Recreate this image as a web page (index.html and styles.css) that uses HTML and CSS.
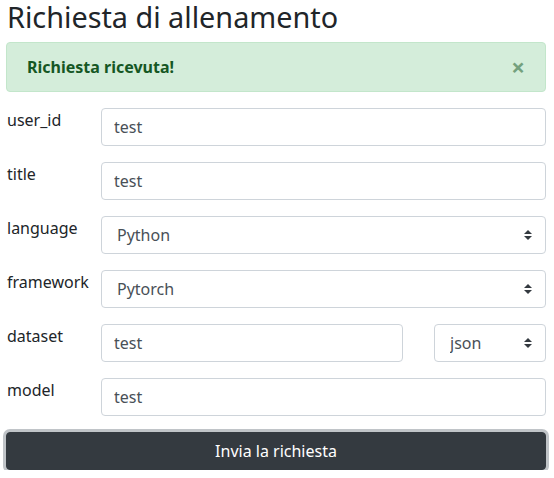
FILE: index.html
```html
<!DOCTYPE html>
<html lang="it">
<head>
<meta charset="utf-8">
<title>Richiesta di allenamento</title>
<link rel="stylesheet" href="styles.css">
</head>
<body>
<div class="page">
  <h3 class="title">Richiesta di allenamento</h3>
  <div class="alert">
    <strong>Richiesta ricevuta!</strong>
    <button class="close" type="button">×</button>
  </div>
  <form class="form">
    <div class="row">
      <label class="lbl">user_id</label>
      <input class="ctl" type="text" value="test">
    </div>
    <div class="row">
      <label class="lbl">title</label>
      <input class="ctl" type="text" value="test">
    </div>
    <div class="row">
      <label class="lbl">language</label>
      <div class="sel-wrap">
        <select class="ctl sel"><option>Python</option></select>
        <svg class="arrow" width="8" height="10" viewBox="0 0 4 5"><path fill="#343a40" d="M2 0L0 2h4zm0 5L0 3h4z"/></svg>
      </div>
    </div>
    <div class="row">
      <label class="lbl">framework</label>
      <div class="sel-wrap">
        <select class="ctl sel"><option>Pytorch</option></select>
        <svg class="arrow" width="8" height="10" viewBox="0 0 4 5"><path fill="#343a40" d="M2 0L0 2h4zm0 5L0 3h4z"/></svg>
      </div>
    </div>
    <div class="row">
      <label class="lbl">dataset</label>
      <div class="split">
        <input class="ctl" type="text" value="test">
        <div class="sel-wrap sel-small">
          <select class="ctl sel"><option>json</option></select>
          <svg class="arrow" width="8" height="10" viewBox="0 0 4 5"><path fill="#343a40" d="M2 0L0 2h4zm0 5L0 3h4z"/></svg>
        </div>
      </div>
    </div>
    <div class="row">
      <label class="lbl">model</label>
      <input class="ctl" type="text" value="test">
    </div>
    <button class="btn" type="button">Invia la richiesta</button>
  </form>
</div>
</body>
</html>
```
FILE: styles.css
```css
* { box-sizing: border-box; }
html, body { margin: 0; padding: 0; background: #fff; }
body {
  font-family: "Noto Sans", "Open Sans", sans-serif;
  font-size: 16px;
  line-height: 1.5;
  color: #212529;
}
.page { padding: 0 8px 0 6px; }
.title {
  margin: 0 0 8px 0;
  font-size: 28.8px;
  font-weight: 400;
  line-height: 34px;
  padding-left: 1px;
}
.alert {
  position: relative;
  background: #d4edda;
  border: 1px solid #c3e6cb;
  color: #155724;
  border-radius: 4px;
  padding: 12px 64px 12px 20px;
  margin-bottom: 16px;
}
.alert strong { font-weight: 700; }
.close {
  position: absolute;
  top: 0;
  right: 0;
  padding: 12px 20px;
  background: transparent;
  border: 0;
  font-family: inherit;
  font-size: 24px;
  font-weight: 700;
  line-height: 1;
  color: #155724;
  opacity: .5;
}
.form { margin: 0; }
.row {
  display: grid;
  grid-template-columns: 95px 1fr;
  margin-bottom: 16px;
}
.split {
  display: flex;
  gap: 31px;
}
.split > .ctl { flex: 1; min-width: 0; }
.sel-small { flex: 0 0 112px; }
.lbl { padding-left: 1px; line-height: 24px; }
.ctl {
  display: block;
  width: 100%;
  height: 38px;
  padding: 6px 12px;
  font-family: inherit;
  font-size: 16px;
  line-height: 1.5;
  color: #495057;
  background: #fff;
  border: 1px solid #ced4da;
  border-radius: 4px;
  margin: 0;
}
.sel-wrap { position: relative; }
.sel {
  -webkit-appearance: none;
  appearance: none;
  padding-left: 15px;
  padding-right: 28px;
}
.arrow {
  position: absolute;
  right: 14px;
  top: 14px;
  pointer-events: none;
}
.btn {
  display: block;
  width: 100%;
  height: 38px;
  padding: 6px 12px;
  font-family: inherit;
  font-size: 16px;
  line-height: 1.5;
  color: #fff;
  background: #343a40;
  border: 1px solid #343a40;
  border-radius: 4px;
  box-shadow: 0 0 0 3px rgba(130, 138, 145, .5);
}
```
